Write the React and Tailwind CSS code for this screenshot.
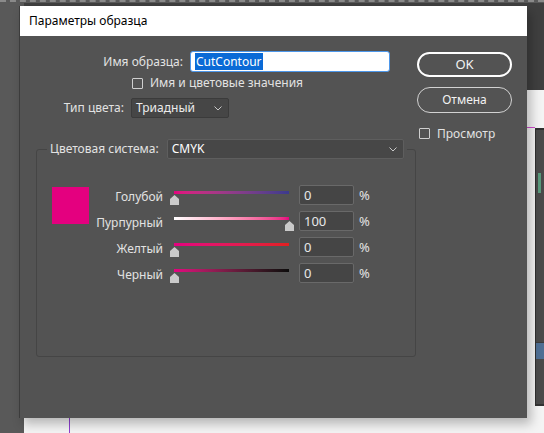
import React from "react";

const font = { fontFamily: '"Noto Sans", "Open Sans", Arial, sans-serif' };

const Chevron = () => (
  <svg width="8" height="5" viewBox="0 0 8 5" className="shrink-0">
    <polyline points="0.5,0.5 4,4 7.5,0.5" fill="none" stroke="#c8c8c8" strokeWidth="1" />
  </svg>
);

const Thumb = () => (
  <svg width="9" height="10" viewBox="0 0 9 10">
    <polygon points="4.5,0 9,4 9,10 0,10 0,4" fill="#cacaca" />
  </svg>
);

const Box = () => (
  <span className="inline-block w-[11px] h-[11px] border border-[#cfcfcf] rounded-[1px] shrink-0" />
);

const sliders = [
  { label: "Голубой", value: 0, bar: "bg-linear-to-r from-[#e4007f] to-[#3b3a8e]" },
  { label: "Пурпурный", value: 100, bar: "bg-linear-to-r from-white to-[#e4007f]" },
  { label: "Желтый", value: 0, bar: "bg-linear-to-r from-[#e4007f] to-[#e3201f]" },
  { label: "Черный", value: 0, bar: "bg-linear-to-r from-[#e4007f] to-[#0c0c0c]" },
];

const SliderRow = ({ row }) => (
  <div className="flex items-start h-[20px]">
    <div className="w-[74px] text-right leading-[20px] mt-[2px] whitespace-nowrap">{row.label}</div>
    <div className="w-[136px] h-[20px] pl-[11px] pt-[6px] flex flex-col">
      <div className={`w-[115px] h-[3px] ${row.bar}`} />
      <div className="mt-[1px] flex" style={{ marginLeft: (row.value / 100) * 115 - 4.5 }}>
        <Thumb />
      </div>
    </div>
    <div className="w-[55px] h-[20px] bg-[#454545] border border-[#696969] rounded-[2px] pl-[4px] leading-[18px] text-[#e8e8e8] text-[13px]">
      {row.value}
    </div>
    <div className="ml-[5px] leading-[20px] text-[13px]">%</div>
  </div>
);

export default function App() {
  return (
    <div className="relative w-[544px] h-[433px] overflow-hidden bg-[#595959] text-[12px]" style={font}>
      {/* app background behind the dialog */}
      <div className="h-[3px] border-t-2 border-dashed border-[#8a8a8a]" />
      <div className="flex h-[430px]">
        <div className="w-[24px] bg-[#595959]" />
        <div className="flex-1 flex flex-col">
          <div className="h-[87px] bg-[#3f3f3f]" />
          <div className="flex-1 bg-[#f4f4f4] flex">
            <div className="w-[46px] border-r border-[#8e3fd0]" />
            <div className="flex-1 flex flex-col items-end">
              <div className="h-[33px]" />
              <div className="w-[17px] h-[5px] flex items-start">
                <div className="w-[8px] h-px bg-[#d24bd0] mt-[4px]" />
              </div>
              <div className="w-[9px] h-[278px] bg-[#4a4a4a] border-t-2 border-l border-[#2f2f2f] flex flex-col">
                <div className="h-[43px]" />
                <div className="h-[20px] ml-[2px] w-[3px] bg-[#5a9a7c]" />
                <div className="h-[150px] border-b border-[#3c3c3c]" />
                <div className="h-[16px] bg-[#4f6f94]" />
                <div className="flex-1 border-b-2 border-[#333]" />
              </div>
            </div>
          </div>
        </div>
      </div>

      {/* dialog window */}
      <div className="absolute left-[19px] top-[6px] w-[508px] h-[412px] bg-[#535353] border-l border-[#3c3c3c] shadow-[4px_6px_10px_rgba(0,0,0,0.25)] flex flex-col text-[#e2e2e2]">
        <div className="h-[30px] bg-white pl-[9px] flex items-center text-black">Параметры образца</div>

        <div className="flex">
          {/* left column */}
          <div className="w-[396px] pt-[15px] flex flex-col">
            <div className="flex items-center h-[21px]">
              <div className="w-[163px] text-right">Имя образца:</div>
              <div className="ml-[7px] w-[200px] h-[21px] bg-white border border-[#4d97ea] rounded-[3px] flex items-center pl-[4px]">
                <span className="bg-[#0a6ad6] text-white leading-[17px] px-px">CutContour</span>
              </div>
            </div>

            <div className="flex items-center h-[12px] mt-[5px] pl-[112px]">
              <Box />
              <span className="ml-[7px]">Имя и цветовые значения</span>
            </div>

            <div className="flex items-center h-[20px] mt-[9px]">
              <div className="w-[104px] text-right">Тип цвета:</div>
              <div className="ml-[7px] w-[98px] h-[20px] bg-[#464646] border border-[#3b3b3b] rounded-[2px] flex items-center justify-between pl-[4px] pr-[6px] text-[#ececec]">
                <span>Триадный</span>
                <Chevron />
              </div>
            </div>

            <fieldset className="mt-[21px] ml-[16px] w-[380px] h-[218px] border border-[#454545] rounded-[3px]">
              <legend className="ml-[10px] px-[3px]">
                <div className="flex items-center h-[20px] whitespace-nowrap">
                  <span>Цветовая система:</span>
                  <div className="ml-[8px] w-[237px] h-[20px] bg-[#474747] border border-[#5e5e5e] rounded-[2px] flex items-center justify-between pl-[4px] pr-[6px] text-white">
                    <span>CMYK</span>
                    <Chevron />
                  </div>
                </div>
              </legend>

              <div className="flex items-start pt-[26px] pl-[15px]">
                <div className="w-[37px] h-[37px] mt-[2px] bg-[#e4007f]" />
                <div className="flex flex-col gap-[6px]">
                  {sliders.map((row) => (
                    <SliderRow key={row.label} row={row} />
                  ))}
                </div>
              </div>
            </fieldset>
          </div>

          {/* right column */}
          <div className="ml-px w-[95px] pt-[16px] flex flex-col">
            <button className="h-[25px] rounded-full border-2 border-white text-[#f2f2f2] text-[13px]">OK</button>
            <button className="mt-[10px] h-[26px] rounded-full border-[1.5px] border-[#d2d2d2] text-[#f2f2f2]">Отмена</button>
            <div className="mt-[15px] ml-[2px] flex items-center h-[11px]">
              <Box />
              <span className="ml-[7px]">Просмотр</span>
            </div>
          </div>
        </div>
      </div>
    </div>
  );
}
